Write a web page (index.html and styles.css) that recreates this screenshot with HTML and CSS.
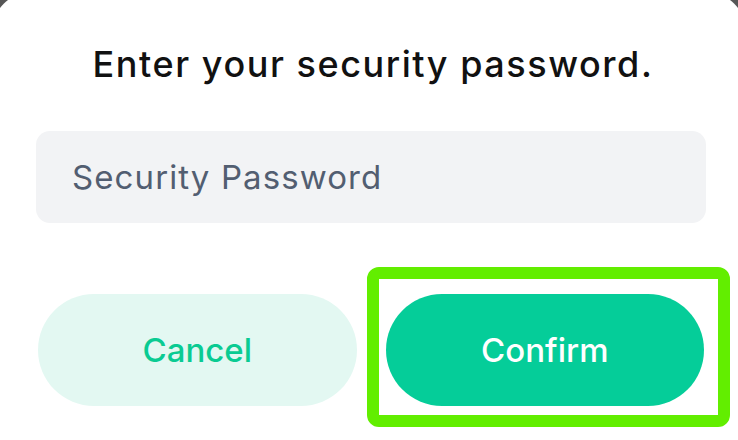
FILE: index.html
```html
<!DOCTYPE html>
<html lang="en">
<head>
<meta charset="utf-8">
<title>Security Password</title>
<link rel="stylesheet" href="styles.css">
</head>
<body>
<div class="dialog">
  <h1 class="title">Enter your security password.</h1>
  <input class="field" type="password" placeholder="Security Password">
  <div class="actions">
    <button class="btn btn-cancel" type="button">Cancel</button>
    <button class="btn btn-confirm" type="button">Confirm</button>
    <div class="highlight"></div>
  </div>
</div>
</body>
</html>
```

FILE: styles.css
```css
html, body {
  margin: 0;
  padding: 0;
  height: 100%;
  overflow: hidden;
}
body {
  background: #565656;
  font-family: Inter, "Noto Sans", "Liberation Sans", sans-serif;
}
.dialog {
  margin: -8px -8px 0 -8px;
  height: 470px;
  background: #ffffff;
  border-radius: 40px 40px 0 0;
  padding: 50px 40px 0 44px;
  box-sizing: border-box;
  display: flex;
  flex-direction: column;
}
.title {
  margin: 0;
  font-size: 36px;
  line-height: 44px;
  font-weight: 450;
  color: #111111;
  text-align: center;
  letter-spacing: 1.55px;
  padding-left: 4px;
}
.field {
  margin-top: 45px;
  height: 92px;
  border: none;
  border-radius: 14px;
  background: #f2f3f5;
  padding: 0 36px;
  font-family: inherit;
  font-size: 33px;
  color: #1a1a1a;
  outline: none;
  box-sizing: border-box;
  width: 100%;
}
.field::placeholder {
  color: #525e71;
  letter-spacing: 1.1px;
}
.actions {
  position: relative;
  margin: 71px 2px 0 2px;
  display: grid;
  grid-template-columns: 1fr 1fr;
  column-gap: 29px;
}
.btn {
  height: 112px;
  border: none;
  border-radius: 56px;
  font-family: inherit;
  font-size: 33px;
  font-weight: 450;
  padding: 0;
}
.btn-cancel {
  background: #e3f8f2;
  color: #0acb92;
}
.btn-confirm {
  background: #05cd99;
  color: #ffffff;
}
.highlight {
  position: absolute;
  left: 329px;
  top: -27px;
  width: 363px;
  height: 160px;
  box-sizing: border-box;
  border: 12px solid #62ee00;
  border-radius: 12px;
  pointer-events: none;
}
```
